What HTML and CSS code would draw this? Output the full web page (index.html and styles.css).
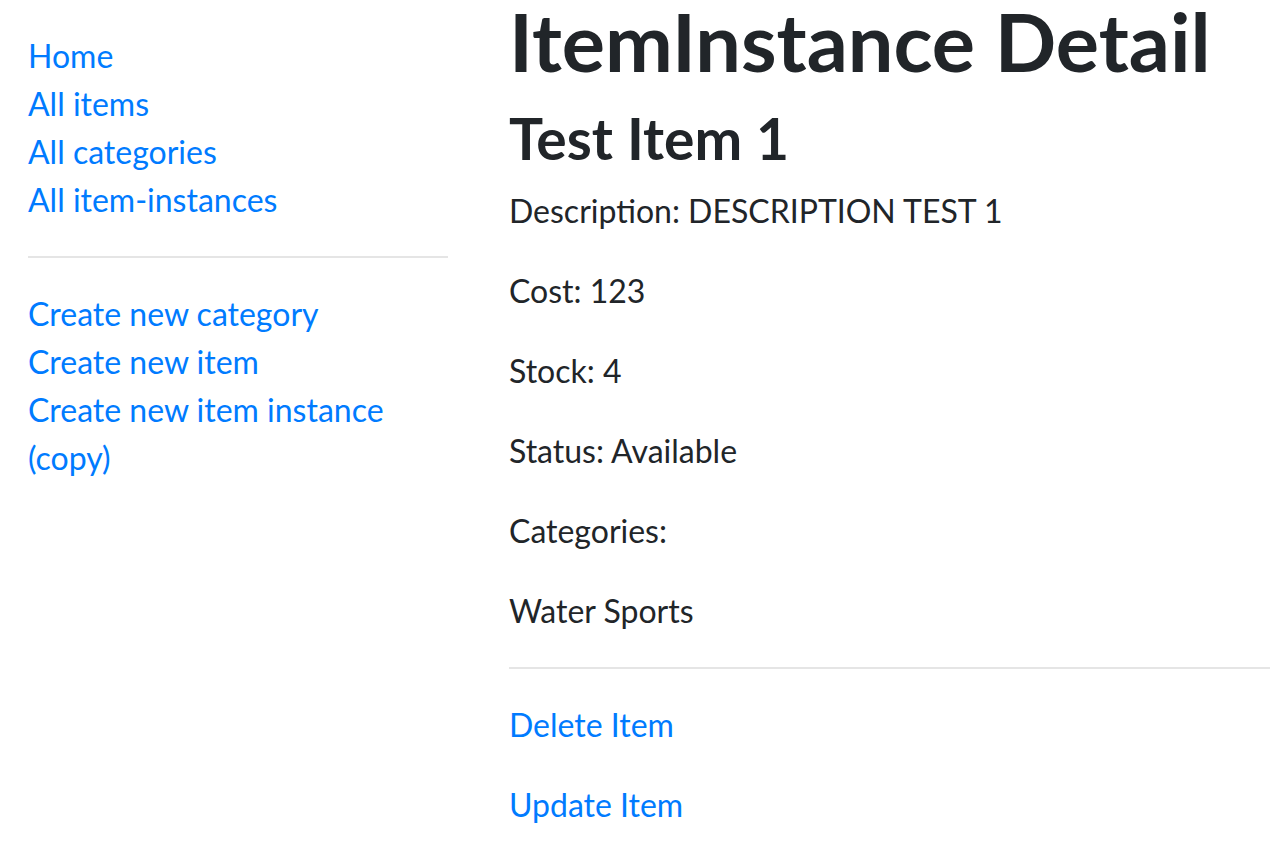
FILE: index.html
```html
<!DOCTYPE html>
<html lang="en">
<head>
<meta charset="utf-8">
<title>ItemInstance Detail</title>
<link rel="stylesheet" href="styles.css">
</head>
<body>
<div class="page">
  <aside class="sidebar">
    <ul class="nav-list">
      <li><a href="#">Home</a></li>
      <li><a href="#">All items</a></li>
      <li><a href="#">All categories</a></li>
      <li><a href="#">All item-instances</a></li>
    </ul>
    <hr class="rule">
    <ul class="nav-list">
      <li><a href="#">Create new category</a></li>
      <li><a href="#">Create new item</a></li>
      <li><a href="#">Create new item instance (copy)</a></li>
    </ul>
  </aside>
  <main class="content">
    <h1 class="title">ItemInstance Detail</h1>
    <h2 class="subtitle">Test Item 1</h2>
    <p class="field">Description: DESCRIPTION TEST 1</p>
    <p class="field">Cost: 123</p>
    <p class="field">Stock: 4</p>
    <p class="field">Status: Available</p>
    <p class="field">Categories:</p>
    <p class="field">Water Sports</p>
    <hr class="rule">
    <p class="field"><a href="#">Delete Item</a></p>
    <p class="field"><a href="#">Update Item</a></p>
  </main>
</div>
</body>
</html>
```

FILE: styles.css
```css
html, body {
  margin: 0;
  padding: 0;
  background: #fff;
  overflow: hidden;
}
body {
  font-family: Lato, "Open Sans", sans-serif;
  font-size: 32px;
  line-height: 48px;
  color: #212529;
}
a {
  color: #007bff;
  text-decoration: none;
}
.page {
  display: flex;
  padding-left: 28px;
}
.sidebar {
  flex: 0 0 420px;
  width: 420px;
  padding-top: 32px;
}
.nav-list {
  list-style: none;
  margin: 0;
  padding: 0;
}
.rule {
  margin: 32px 0;
  border: 0;
  border-top: 2px solid rgba(0, 0, 0, 0.1);
  height: 0;
}
.content {
  flex: 1 1 auto;
  min-width: 0;
  margin-left: 61px;
  padding-top: 1px;
}
.title {
  margin: 0 0 21px;
  font-size: 81px;
  line-height: 80px;
  font-weight: 700;
  white-space: nowrap;
}
.subtitle {
  margin: 0 0 13px;
  font-size: 57px;
  line-height: 72px;
  font-weight: 700;
}
.field {
  margin: 0 0 32px;
}
```
